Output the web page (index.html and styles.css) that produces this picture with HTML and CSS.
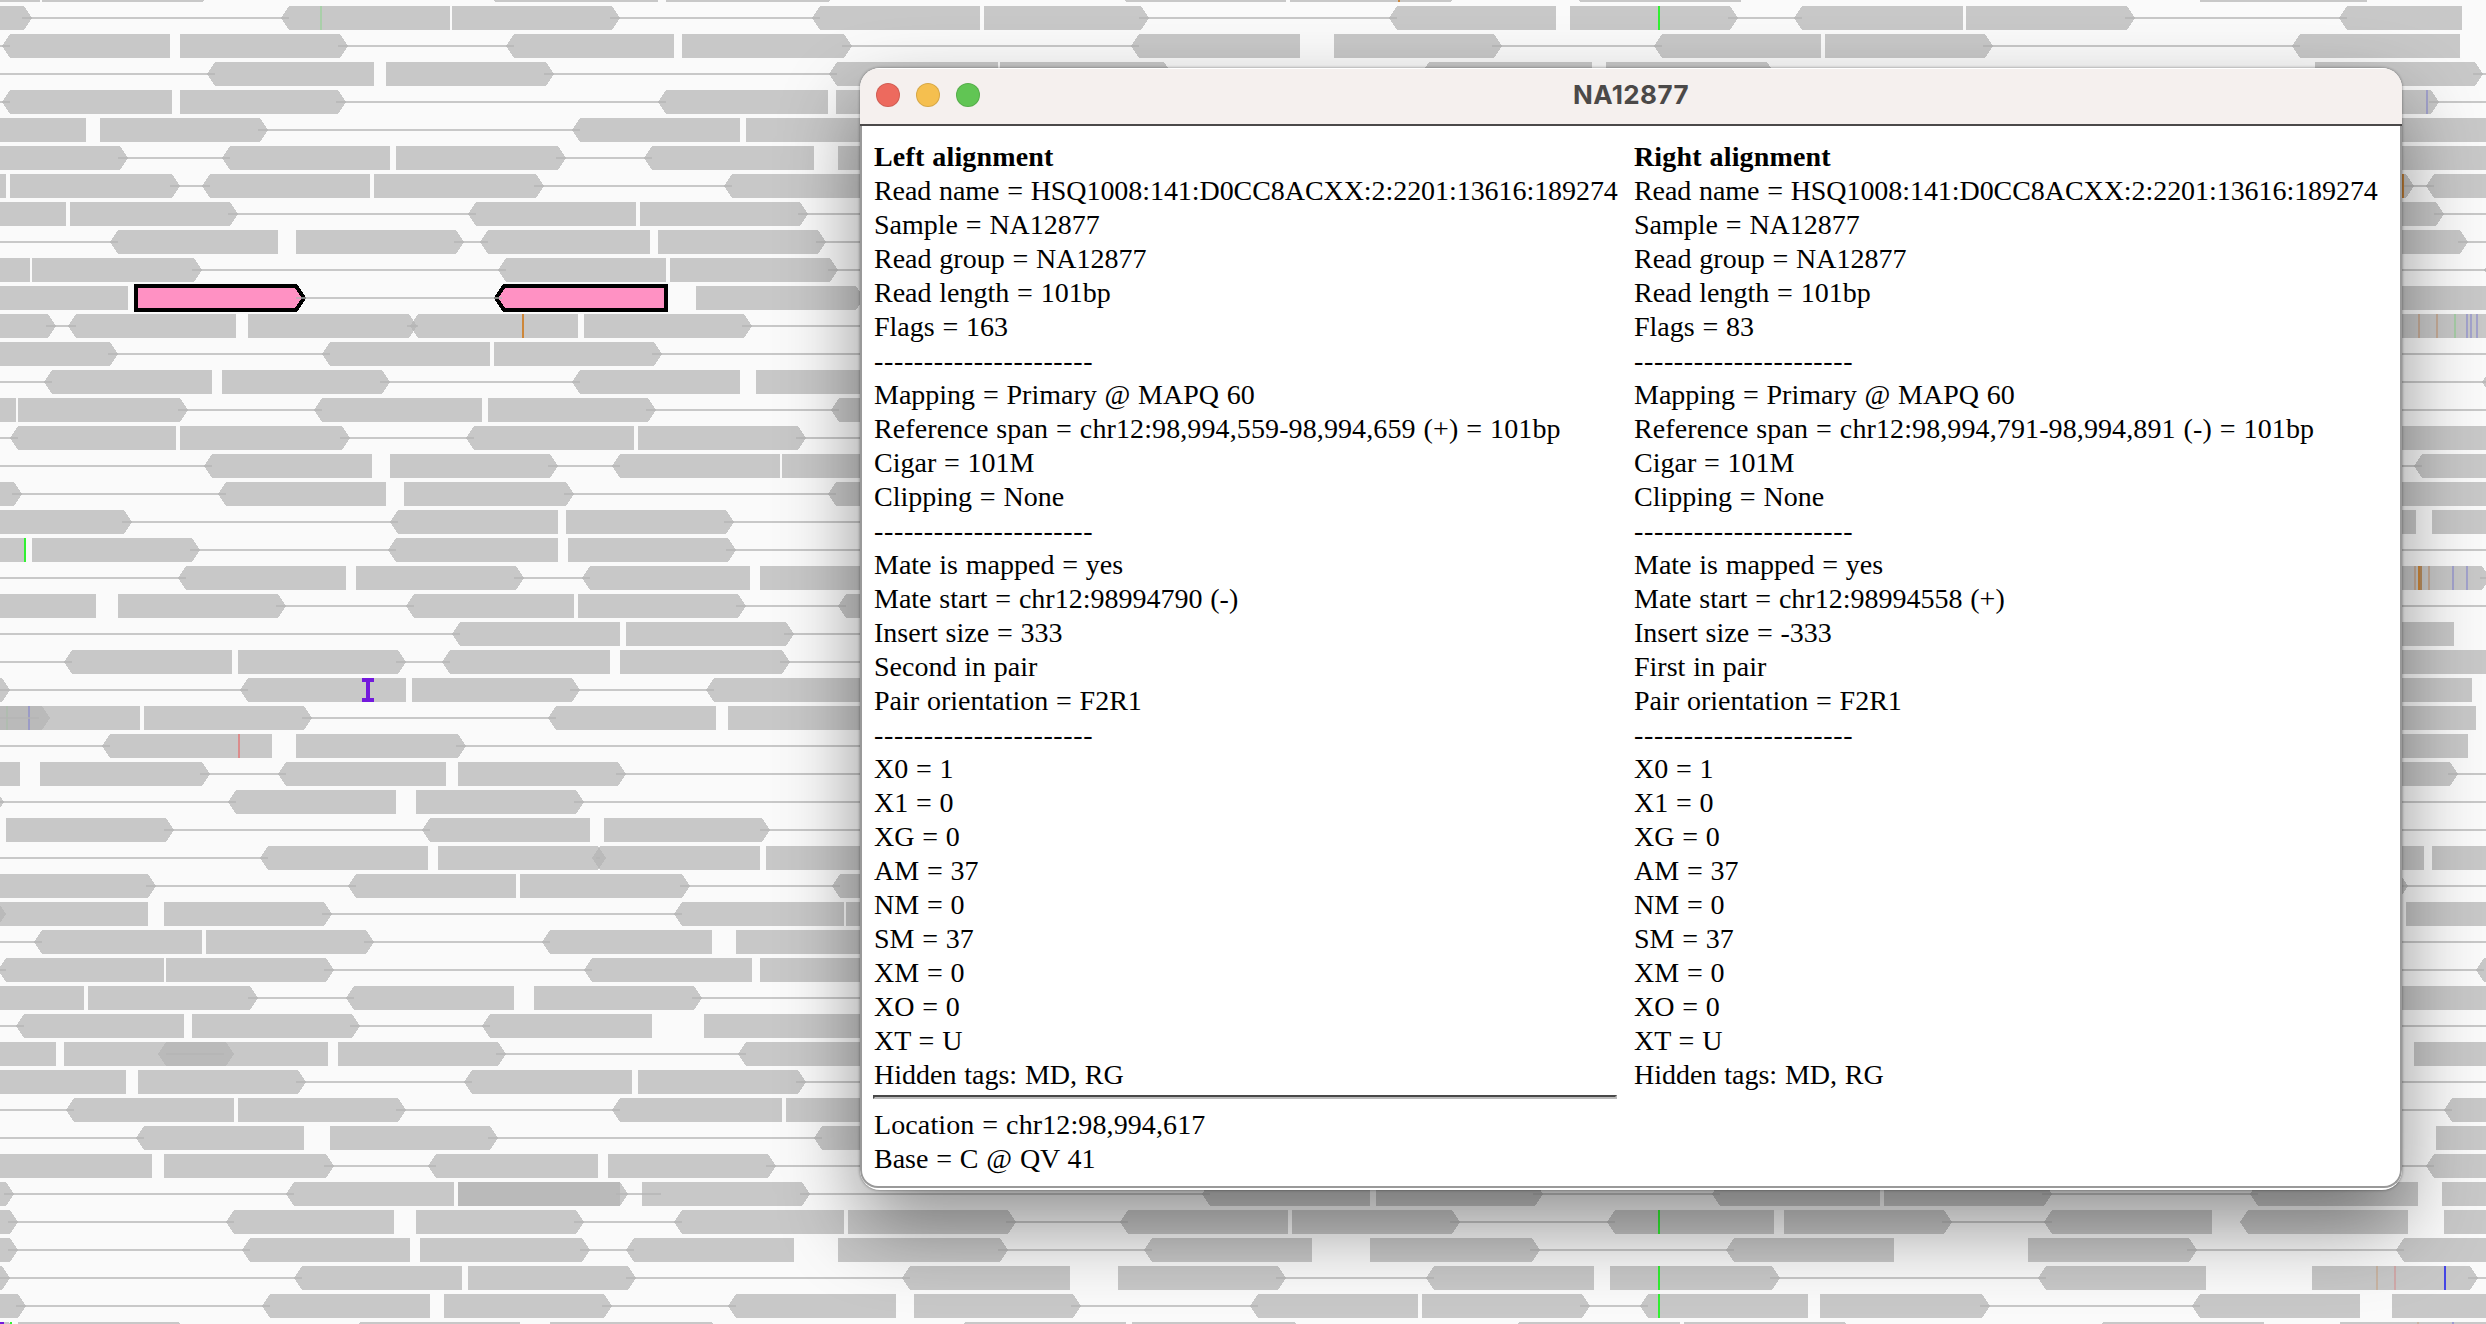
FILE: index.html
```html
<!DOCTYPE html>
<html lang="en">
<head>
<meta charset="utf-8">
<title>NA12877</title>
<link rel="stylesheet" href="styles.css">
</head>
<body>
<svg class="track" id="track" width="2486" height="1324" aria-hidden="true"></svg>
<section class="window">
  <header class="titlebar">
    <div class="lights"><span class="light close"></span><span class="light minimize"></span><span class="light expand"></span></div>
    <h1 class="title">NA12877</h1>
  </header>
  <div class="content">
    <div class="column">
      <p class="heading">Left alignment</p>
      <p class="name">Read name = HSQ1008:141:D0CC8ACXX:2:2201:13616:189274</p>
      <p>Sample = NA12877</p>
      <p>Read group = NA12877</p>
      <p>Read length = 101bp</p>
      <p>Flags = 163</p>
      <p class="dashes">----------------------</p>
      <p>Mapping = Primary @ MAPQ 60</p>
      <p class="locus">Reference span = chr12:98,994,559-98,994,659 (+) = 101bp</p>
      <p>Cigar = 101M</p>
      <p>Clipping = None</p>
      <p class="dashes">----------------------</p>
      <p>Mate is mapped = yes</p>
      <p>Mate start = chr12:98994790 (-)</p>
      <p>Insert size = 333</p>
      <p>Second in pair</p>
      <p>Pair orientation = F2R1</p>
      <p class="dashes">----------------------</p>
      <p>X0 = 1</p>
      <p>X1 = 0</p>
      <p>XG = 0</p>
      <p>AM = 37</p>
      <p>NM = 0</p>
      <p>SM = 37</p>
      <p>XM = 0</p>
      <p>XO = 0</p>
      <p>XT = U</p>
      <p>Hidden tags: MD, RG</p>
      <hr class="rule">
      <p class="locus">Location = chr12:98,994,617</p>
      <p>Base = C @ QV 41</p>
    </div>
    <div class="column">
      <p class="heading">Right alignment</p>
      <p class="name">Read name = HSQ1008:141:D0CC8ACXX:2:2201:13616:189274</p>
      <p>Sample = NA12877</p>
      <p>Read group = NA12877</p>
      <p>Read length = 101bp</p>
      <p>Flags = 83</p>
      <p class="dashes">----------------------</p>
      <p>Mapping = Primary @ MAPQ 60</p>
      <p class="locus">Reference span = chr12:98,994,791-98,994,891 (-) = 101bp</p>
      <p>Cigar = 101M</p>
      <p>Clipping = None</p>
      <p class="dashes">----------------------</p>
      <p>Mate is mapped = yes</p>
      <p>Mate start = chr12:98994558 (+)</p>
      <p>Insert size = -333</p>
      <p>First in pair</p>
      <p>Pair orientation = F2R1</p>
      <p class="dashes">----------------------</p>
      <p>X0 = 1</p>
      <p>X1 = 0</p>
      <p>XG = 0</p>
      <p>AM = 37</p>
      <p>NM = 0</p>
      <p>SM = 37</p>
      <p>XM = 0</p>
      <p>XO = 0</p>
      <p>XT = U</p>
      <p>Hidden tags: MD, RG</p>
    </div>
  </div>
</section>
<script src="track.js"></script>
</body>
</html>
```
FILE: styles.css
```css
* { box-sizing: border-box; }
body {
  margin: 0;
  width: 2486px;
  height: 1324px;
  overflow: hidden;
  position: relative;
  background: #fafafa;
}
.track { display: block; shape-rendering: crispEdges; }
.read, .link { fill: rgba(180, 180, 180, .72); }
.selected { fill: #ff91c3; stroke: #000; stroke-width: 4; }
.insertion { fill: #7319dc; }
.window {
  position: absolute;
  left: 860px;
  top: 68px;
  width: 1542px;
  height: 1122px;
  display: flex;
  flex-direction: column;
  border-radius: 20px;
  overflow: hidden;
  background: #fff;
  box-shadow: 0 36px 80px rgba(0, 0, 0, .42), 0 0 3px rgba(0, 0, 0, .45);
}
.titlebar {
  display: grid;
  grid-template-columns: 1fr auto 1fr;
  align-items: center;
  height: 58px;
  flex: none;
  padding: 0 16px 2px;
  background: #f5f0ee;
  border-bottom: 2px solid #4b4949;
  box-shadow: inset 0 1px #fff;
}
.lights { display: flex; gap: 16px; }
.light { width: 24px; height: 24px; border-radius: 50%; border: 1px solid rgba(0, 0, 0, .12); }
.close { background: #ed6a5e; }
.minimize { background: #f5bf4f; }
.expand { background: #61c554; }
.title {
  margin: 0;
  font: 700 26px/30px Inter, "Liberation Sans", sans-serif;
  letter-spacing: .4px;
  color: #4b4948;
}
.content {
  flex: none;
  display: flex;
  gap: 16px;
  height: 1062px;
  padding: 14px 11px 0;
  border: solid #999;
  border-width: 0 2px 2px;
  border-radius: 0 0 18px 18px;
  font: 28px/34px "Liberation Serif", "Times New Roman", serif;
  word-spacing: .8px;
  color: #000;
}
.column { width: 744px; white-space: nowrap; }
.column p { margin: 0 0 0 1px; height: 34px; }
.column .heading { font-weight: 700; letter-spacing: .15px; }
.column .name { letter-spacing: -.06px; }
.column .locus { letter-spacing: .11px; }
.column .dashes { letter-spacing: .64px; }
.rule {
  height: 4px;
  margin: 3px 0 9px;
  border: 2px solid;
  border-color: #484848 #bbb #bbb #484848;
}
```
FILE: track.js
```js
// Reads per row: "a>b" forward, "a<b" reverse, "a_b" clipped square, "a=b" connector, "!" prefix selected.
const rows = [
  "-130_40 42>211 487<658 666>837 1118<1286 1290>1459 1572<1741 2200_2367",
  "-136>32 281<450 452>620 812<980 984>1149 1389<1556 1570>1738 1794<1963 1966>2135 2339<2462",
  "2<170 180>348 506<674 682>852 1131<1300 1334>1502 1654<1821 1825>1993 2292<2460",
  "207<374 386>554 829<998 1000>1172 1421<1592 1606>1775 2315>2483",
  "2<172 180>346 658<828 836>1004 2270>2439",
  "-80_86 100>268 572<740 746>914 2380_2500",
  "-40>128 222<390 396>566 644<814 838>1004 2380_2500",
  "-160_6 10>180 202<370 374>544 724<892 2245>2414 2426<2594",
  "-100_66 70>238 468<636 640>808 1100<1268 2275>2444",
  "110<278 296>464 480<650 658>826 1100<1268 2300>2468",
  "-138_30 32>202 498<666 670>838 1100<1268 1900>2000 2484<2600",
  "-40_128 !134>306 !494<668 696>864 2380_2500",
  "-112>56 68<236 248>417 410<578 584>752 1100<1268 2380_2500",
  "-50>118 322<490 494>662",
  "44<212 222>390 572<740 756>924 2482<2600",
  "-150_16 18>188 314<482 488>656 831<1000 1100>1268",
  "10<176 180>350 466<634 638>806 1000<1168 2380_2500",
  "204<372 390>558 612<780 782>950 2414<2600",
  "-146>22 218<386 404>574 828<996 2380_2500",
  "-36>132 390<558 566>734 1000<1168 2300_2416 2432_2600",
  "-140_26 32>200 388<558 568>736",
  "178<346 356>524 582<750 760>928 1100<1200 2322>2490",
  "-70_96 118>286 406<574 578>746 838<1006 1100>1268",
  "452<620 626>794 1000<1168 2286_2454",
  "64<232 238>406 442<610 620>790 1000<1168 2380_2500",
  "-158>10 240<406 412>580 706<874 2300_2472",
  "-28_140 -120>50 -10=39 144>312 548<716 728_896 2300_2476",
  "102<272 296>466 1000<1168 2300_2468",
  "-150_20 40>210 278<446 458>626 1000<1168 2290>2458",
  "-164>4 228<396 416>584",
  "6>174 422<590 604>770",
  "260<428 438>606 592<760 766_934 2260_2424 2432_2600",
  "-12>156 348<516 520>690 832<1000 2240>2408",
  "-20_148 -160>6 164>332 674<844 846_1014 2406_2600",
  "34<202 206>374 542<712 736>904",
  "-2<164 166>334 584<752 760>928 2476<2600",
  "-84_84 88>258 346<514 534>702 1000<1168 2380_2500",
  "16<184 192>360 482<652 704>872",
  "-110_56 64>234 158<328 338>506 738<906 2414_2600",
  "-40_126 138>306 464<632 638>806",
  "66<234 238>406 612<782 786>954 2444<2600",
  "136<304 330>498 814<982 2436_2600",
  "-16_152 164>334 428<598 608>776 2426<2600",
  "-154>14 286<454 458>628 458_620 616=661 642>810 1202<1370 1376>1543 1712<1880 1884>2052 2250<2418 2442_2600",
  "-150>18 226<394 416>584 674<844 848>1016 1120<1288 1292>1460 1607<1774 1784>1952 2044<2212 2240<2408 2444_2600",
  "-150>18 242<410 420>590 626<794 838>1008 1144<1312 1370>1540 1726<1894 2028>2197 2396<2600",
  "-158>10 294<462 468>636 902<1070 1118>1286 1426<1594 1610>1780 2038<2206 2312>2478",
  "-142>26 262<430 444>612 728<896 914>1081 1250<1418 1422>1590 1640<1808 1820>1990 2192<2360 2392_2560",
  "-150>17 18>187 352<520 550>720 957<1126 1132>1303 1511<1680 1684>1853 2095<2264 2340_2508"
];
// Mismatched bases: [row, x, colour, width]
const orange = "#cd873a", paleOrange = "#c6ac98", green = "#32f032", blue = "#4646e6", paleBlue = "#a3a3cc";
const marks = [
  [0, 1398, orange], [1, 320, "#a9cfa9"], [1, 1658, green], [4, 2426, paleBlue], [7, 2402, orange],
  [12, 522, orange], [12, 2418, paleOrange], [12, 2436, paleOrange], [12, 2454, "#a6cda6"],
  [12, 2466, paleBlue], [12, 2470, paleBlue], [12, 2476, paleBlue], [20, 24, green],
  [21, 2414, paleOrange], [21, 2418, orange], [21, 2420, "#b98d5e"], [21, 2428, paleOrange],
  [21, 2452, paleBlue], [21, 2466, paleBlue], [26, 6, "#b0bcb0"], [26, 28, "#9b9bc6"],
  [27, 238, "#db8c8c"], [44, 1658, green], [46, 1658, green], [47, 1658, green],
  [46, 2376, "#c8b4a3"], [46, 2394, "#d0a9a9"], [46, 2444, blue], [48, 10, green],
  [48, 2417, "#c8b4a3"], [48, 2452, "#9b9bd0"]
];
const rect = (cls, x, y, w, h) => `<rect class="${cls}" x="${x}" y="${y}" width="${w}" height="${h}"/>`;
const layers = { reads: "", marks: "", links: "" };

rows.forEach((row, i) => {
  const y = i * 28 - 22;
  const reads = row.split(" ").map(t => {
    const [, sel, a, kind, b] = t.match(/^(!?)(-?\d+)([<>_=])(\d+)$/);
    return { sel, a: +a, b: +b, kind };
  });
  reads.forEach(({ sel, a, b, kind }, n) => {
    if (kind === "=") { layers.links += rect("link", a, y + 11, b - a, 2); return; }
    // The outline of a selected read sits inside its extent.
    const x0 = sel ? a + 2 : a, x1 = sel ? b - 2 : b;
    const l = kind === "<" ? 8 : 0, r = kind === ">" ? 8 : 0;
    layers.reads += `<polygon class="${sel ? "selected" : "read"}" points="${x0},${y + 12} ${x0 + l},${y} ${x1 - r},${y} ${x1},${y + 12} ${x1 - r},${y + 24} ${x0 + l},${y + 24}"/>`;
    const next = reads[n + 1];
    if (kind === ">" && (!next || next.kind === "<")) {
      const from = b - 10, to = next ? next.a + 8 : 2486;
      layers.links += rect("link", Math.min(from, to), y + 11, Math.abs(to - from), 2);
    }
    if (n === 0 && kind === "<") layers.links += rect("link", 0, y + 11, Math.max(a + 8, 0), 2);
  });
});
marks.forEach(([row, x, colour, w = 2]) => {
  layers.marks += `<rect x="${x}" y="${row * 28 - 22}" width="${w}" height="24" fill="${colour}"/>`;
});
layers.marks += `<path class="insertion" d="M362 678h12v4h-4v16h4v4h-12v-4h4v-16h-4zM0 1322h4v2H0z"/>`;
document.getElementById("track").innerHTML = layers.reads + layers.marks + layers.links;
```
